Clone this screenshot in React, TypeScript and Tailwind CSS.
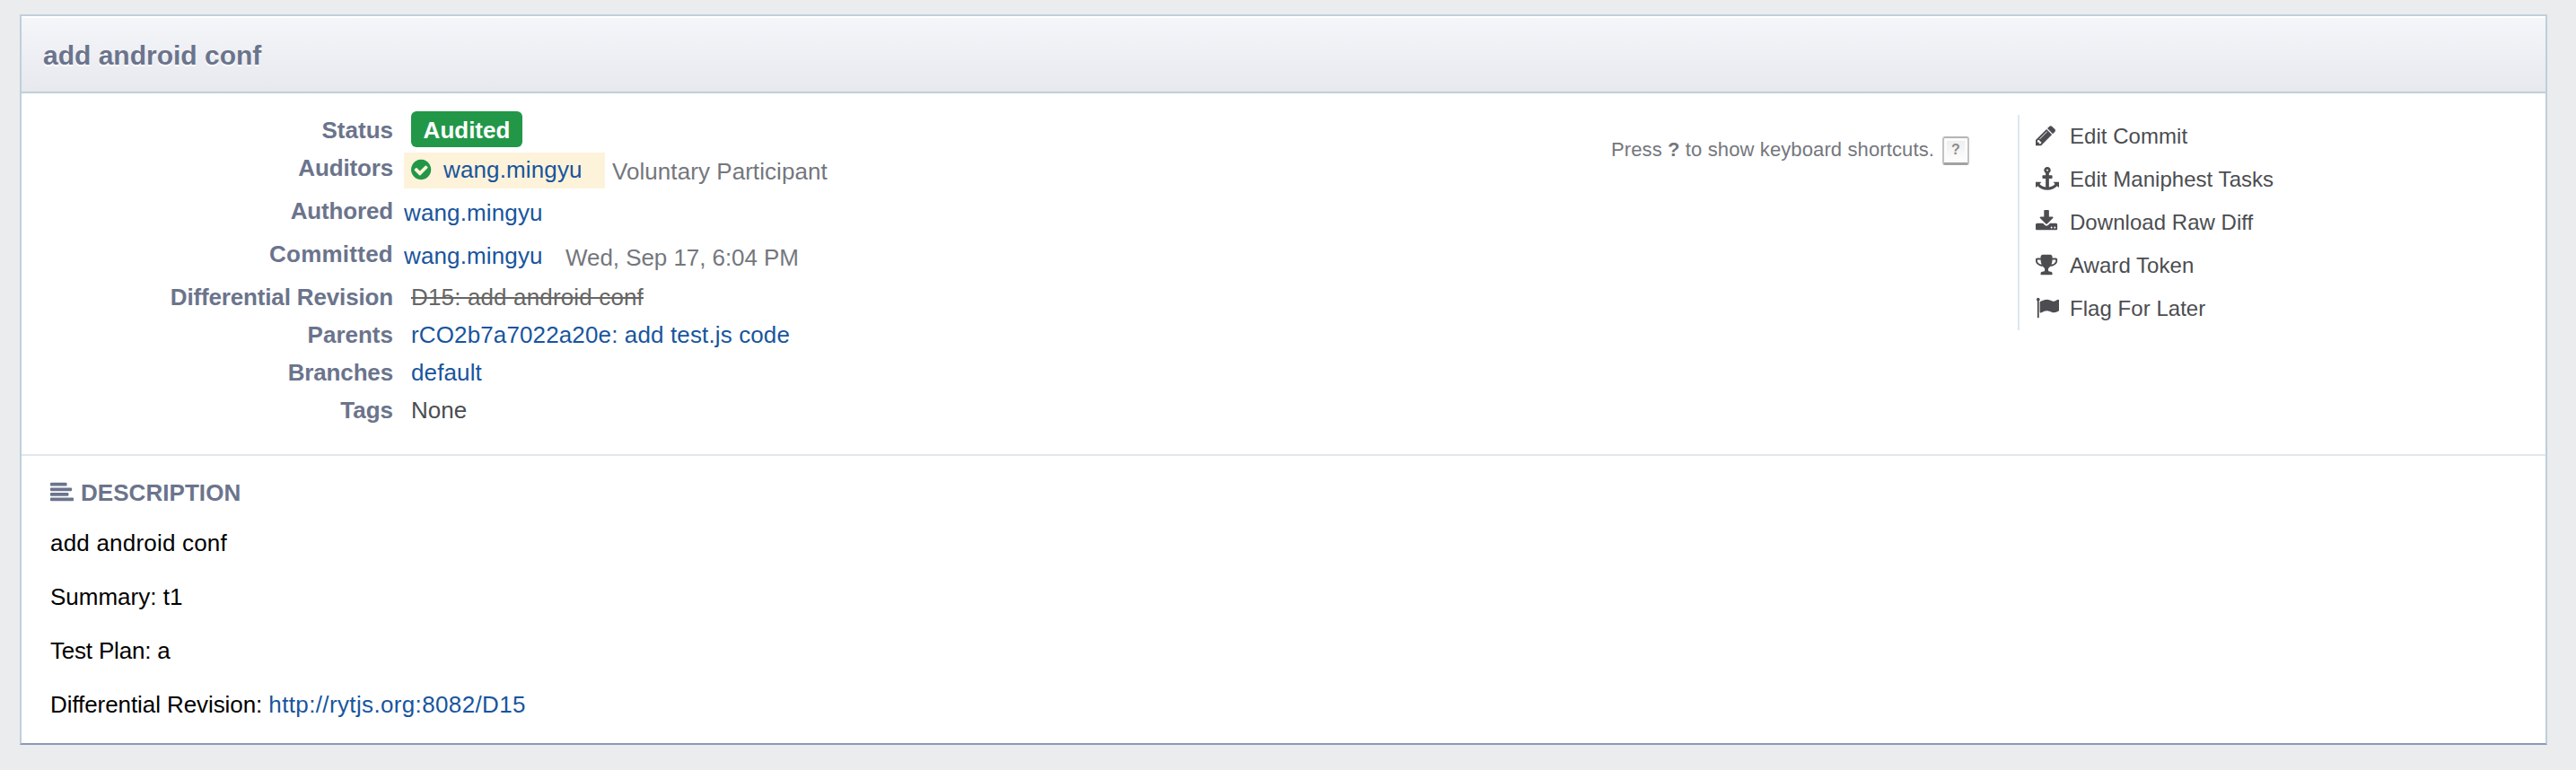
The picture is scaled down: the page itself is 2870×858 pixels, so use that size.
import type { ReactNode } from "react";

const ICONS = {
  pencil:
    "M363 0l91 91l-235 235l-91 -91v-107h128v-128h107zM886 928q0 22 -22 22q-10 0 -17 -7l-542 -542q-7 -7 -7 -17q0 -22 22 -22q10 0 17 7l542 542q7 7 7 17zM832 1120l416 -416l-832 -832h-416v416zM1515 1024q0 -53 -37 -90l-166 -166l-416 416l166 165q36 38 90 38q53 0 91 -38l235 -234q37 -39 37 -91z",
  anchor:
    "M960 1280q0 26 -19 45t-45 19t-45 -19t-19 -45t19 -45t45 -19t45 19t19 45zM1792 352v-352q0 -22 -20 -30q-8 -2 -12 -2q-12 0 -23 9l-93 93q-119 -143 -318.5 -226.5t-429.5 -83.5t-429.5 83.5t-318.5 226.5l-93 -93q-9 -9 -23 -9q-4 0 -12 2q-20 8 -20 30v352q0 14 9 23t23 9h352q22 0 30 -20q8 -19 -7 -35l-100 -100q67 -91 189.5 -153.5t271.5 -82.5v647h-192q-26 0 -45 19t-19 45v128q0 26 19 45t45 19h192v163q-58 34 -93 92.5t-35 128.5q0 106 75 181t181 75t181 -75t75 -181q0 -70 -35 -128.5t-93 -92.5v-163h192q26 0 45 -19t19 -45v-128q0 -26 -19 -45t-45 -19h-192v-647q149 20 271.5 82.5t189.5 153.5l-100 100q-15 16 -7 35q8 20 30 20h352q14 0 23 -9t9 -23z",
  download:
    "M1280 192q0 26 -19 45t-45 19t-45 -19t-19 -45t19 -45t45 -19t45 19t19 45zM1536 192q0 26 -19 45t-45 19t-45 -19t-19 -45t19 -45t45 -19t45 19t19 45zM1664 416v-320q0 -40 -28 -68t-68 -28h-1472q-40 0 -68 28t-28 68v320q0 40 28 68t68 28h465l135 -136q58 -56 136 -56t136 56l136 136h464q40 0 68 -28t28 -68zM1339 985q17 -41 -14 -70l-448 -448q-18 -19 -45 -19t-45 19l-448 448q-31 29 -14 70q17 39 59 39h256v448q0 26 19 45t45 19h256q26 0 45 -19t19 -45v-448h256q42 0 59 -39z",
  trophy:
    "M458 653q-74 162 -74 371h-256v-96q0 -78 94.5 -162t235.5 -113zM1536 928v96h-256q0 -209 -74 -371q141 29 235.5 113t94.5 162zM1664 1056v-128q0 -71 -41.5 -143t-112 -130t-173 -97.5t-215.5 -44.5q-42 -54 -95 -95q-38 -34 -52.5 -72.5t-14.5 -89.5q0 -54 30.5 -91t97.5 -37q75 0 133.5 -45.5t58.5 -114.5v-64q0 -14 -9 -23t-23 -9h-832q-14 0 -23 9t-9 23v64q0 69 58.5 114.5t133.5 45.5q67 0 97.5 37t30.5 91q0 51 -14.5 89.5t-52.5 72.5q-53 41 -95 95q-113 5 -215.5 44.5t-173 97.5t-112 130t-41.5 143v128q0 40 28 68t68 28h288v96q0 66 47 113t113 47h576q66 0 113 -47t47 -113v-96h288q40 0 68 -28t28 -68z",
  flag: "M320 1280q0 -72 -64 -110v-1266q0 -13 -9.5 -22.5t-22.5 -9.5h-64q-13 0 -22.5 9.5t-9.5 22.5v1266q-64 38 -64 110q0 53 37.5 90.5t90.5 37.5t90.5 -37.5t37.5 -90.5zM1792 1216v-763q0 -25 -12.5 -38.5t-39.5 -27.5q-215 -116 -369 -116q-61 0 -123.5 22t-108.5 48t-115.5 48t-142.5 22q-192 0 -464 -146q-17 -9 -33 -9q-26 0 -45 19t-19 45v742q0 32 31 55q21 14 79 43q236 120 421 120q107 0 200 -29t219 -88q38 -19 88 -19q54 0 117.5 21t110 47t88 47t54.5 21q26 0 45 -19t19 -45z",
  alignLeft:
    "M1792 192v-128q0 -26 -19 -45t-45 -19h-1664q-26 0 -45 19t-19 45v128q0 26 19 45t45 19h1664q26 0 45 -19t19 -45zM1408 576v-128q0 -26 -19 -45t-45 -19h-1280q-26 0 -45 19t-19 45v128q0 26 19 45t45 19h1280q26 0 45 -19t19 -45zM1664 960v-128q0 -26 -19 -45t-45 -19h-1536q-26 0 -45 19t-19 45v128q0 26 19 45t45 19h1536q26 0 45 -19t19 -45zM1280 1344v-128q0 -26 -19 -45t-45 -19h-1152q-26 0 -45 19t-19 45v128q0 26 19 45t45 19h1152q26 0 45 -19t19 -45z",
  checkCircle:
    "M1284 802q0 28 -18 46l-91 90q-19 19 -45 19t-45 -19l-408 -407l-226 226q-19 19 -45 19t-45 -19l-91 -90q-18 -18 -18 -46q0 -27 18 -45l362 -362q19 -19 45 -19q27 0 46 19l543 543q18 18 18 45zM1536 640q0 -209 -103 -385.5t-279.5 -279.5t-385.5 -103t-385.5 103t-279.5 279.5t-103 385.5t103 385.5t279.5 279.5t385.5 103t385.5 -103t279.5 -279.5t103 -385.5z",
};

type IconName = keyof typeof ICONS;

function Icon({ name, className }: { name: IconName; className: string }) {
  return (
    <svg viewBox="0 -1536 1792 1792" className={`h-[26px] w-[26px] shrink-0 fill-current ${className}`} aria-hidden="true">
      <path d={ICONS[name]} transform="scale(1 -1)" />
    </svg>
  );
}

function Property({
  label,
  labelClass = "",
  tall,
  children,
}: {
  label: string;
  labelClass?: string;
  tall?: boolean;
  children: ReactNode;
}) {
  return (
    <div className={`flex leading-[42px] ${tall ? "h-12" : "h-[42px]"}`}>
      <dt className={`w-[414px] shrink-0 text-right font-bold text-[#6b748c] ${labelClass}`}>{label}</dt>
      <dd className={`flex ${tall ? "ml-3" : "ml-5"}`}>{children}</dd>
    </div>
  );
}

function Link({ children, className = "tracking-[0.13px]" }: { children: ReactNode; className?: string }) {
  return (
    <a href="#" className={`text-[#18559d] ${className}`}>
      {children}
    </a>
  );
}

const ACTIONS: { icon: IconName; label: string }[] = [
  { icon: "pencil", label: "Edit Commit" },
  { icon: "anchor", label: "Edit Maniphest Tasks" },
  { icon: "download", label: "Download Raw Diff" },
  { icon: "trophy", label: "Award Token" },
  { icon: "flag", label: "Flag For Later" },
];

export default function App() {
  return (
    <div className="h-[858px] w-[2870px] bg-[#ebecee] pt-4 pl-[22px] font-['Liberation_Sans',Arial,sans-serif] text-[26px] whitespace-nowrap">
      <main className="flex h-[814px] w-[2816px] flex-col border-2 border-[#bfcfda] border-b-[#8c98b8] bg-white">
        <header className="h-[86px] border-b-2 border-[#bfcfda] bg-linear-to-b from-[#f4f6fa] to-[#e7e9ee] pt-[3px] pl-6 shadow-[inset_0_2px_0_#fff]">
          <h1 className="text-[30px] leading-[81px] font-bold text-[#6b748c] [text-shadow:0_2px_0_#fff]">
            add android conf
          </h1>
        </header>

        <section className="flex h-[404px] border-b-2 border-[#dde8ef] pt-5">
          <dl className="w-[1748px]">
            <Property label="Status">
              <span className="h-10 w-[124px] rounded-md bg-[#229748] text-center leading-[42px] font-bold text-white">
                Audited
              </span>
            </Property>
            <Property label="Auditors" labelClass="tracking-[-0.15px]" tall>
              <span className="mt-1 flex h-10 w-[224px] bg-[#fdf3da] pl-2">
                <Icon name="checkCircle" className="mt-[6px] text-[#229748]" />
                <span className="ml-[10px] leading-[38px]">
                  <Link>wang.mingyu</Link>
                </span>
              </span>
              <span className="ml-2 pt-1 tracking-[0.06px] text-[#74777d]">Voluntary Participant</span>
            </Property>
            <Property label="Authored" labelClass="tracking-[-0.15px]" tall>
              <span className="pt-[2px]">
                <Link>wang.mingyu</Link>
              </span>
            </Property>
            <Property label="Committed" labelClass="tracking-[0.25px]" tall>
              <span className="w-[180px] pt-[2px]">
                <Link>wang.mingyu</Link>
              </span>
              <span className="pt-1 tracking-[-0.06px] text-[#74777d]">Wed, Sep 17, 6:04 PM</span>
            </Property>
            <Property label="Differential Revision" labelClass="tracking-[-0.15px]">
              <a href="#" className="tracking-[0.15px] text-[#666] line-through">
                D15: add android conf
              </a>
            </Property>
            <Property label="Parents">
              <Link>rCO2b7a7022a20e: add test.js code</Link>
            </Property>
            <Property label="Branches" labelClass="tracking-[-0.15px]">
              <Link>default</Link>
            </Property>
            <Property label="Tags">
              <span className="text-[#4b4d51]">None</span>
            </Property>
          </dl>

          <p className="mt-7 flex h-8 w-[476px] pl-[23px] text-[22px] leading-[30px] tracking-[0.12px] text-[#74777d]">
            <span className="w-[369px]">
              Press <b>?</b> to show keyboard shortcuts.
            </span>
            <kbd className="flex h-8 w-[30px] justify-center rounded-[3px] border-2 border-b-[3px] border-[#c2c2c2] border-t-[#b4b4b4] border-b-[#a2a2a2] bg-linear-to-b from-[#ececec] to-white font-['Liberation_Sans',Arial,sans-serif] text-[16px] leading-[25px] font-bold text-[#8c8c8c] shadow-[inset_0_0_0_3px_#fbfbfb]">
              ?
            </kbd>
          </p>

          <ul className="mt-1 h-60 border-l-2 border-[#dde8ef] pl-[18px] text-2xl leading-[48px] tracking-[0.04px] text-[#4b4d51]">
            {ACTIONS.map(({ icon, label }) => (
              <li key={label} className="flex h-12">
                <Icon name={icon} className="mt-[10px]" />
                <a href="#" className="ml-3">
                  {label}
                </a>
              </li>
            ))}
          </ul>
        </section>

        <section className="pt-5 pl-8 text-black">
          <h2 className="flex h-[42px] leading-[42px] font-bold text-[#6b748c]">
            <Icon name="alignLeft" className="mt-2" />
            <span className="ml-2 tracking-[0.05px]">DESCRIPTION</span>
          </h2>
          <div className="mt-[14px] flex flex-col gap-[18px] leading-[42px]">
            <p className="tracking-[0.2px]">add android conf</p>
            <p>Summary: t1</p>
            <p className="tracking-[-0.2px]">Test Plan: a</p>
            <p className="tracking-[-0.08px]">
              Differential Revision: <Link className="tracking-[0.36px]">http://rytjs.org:8082/D15</Link>
            </p>
          </div>
        </section>
      </main>
    </div>
  );
}
